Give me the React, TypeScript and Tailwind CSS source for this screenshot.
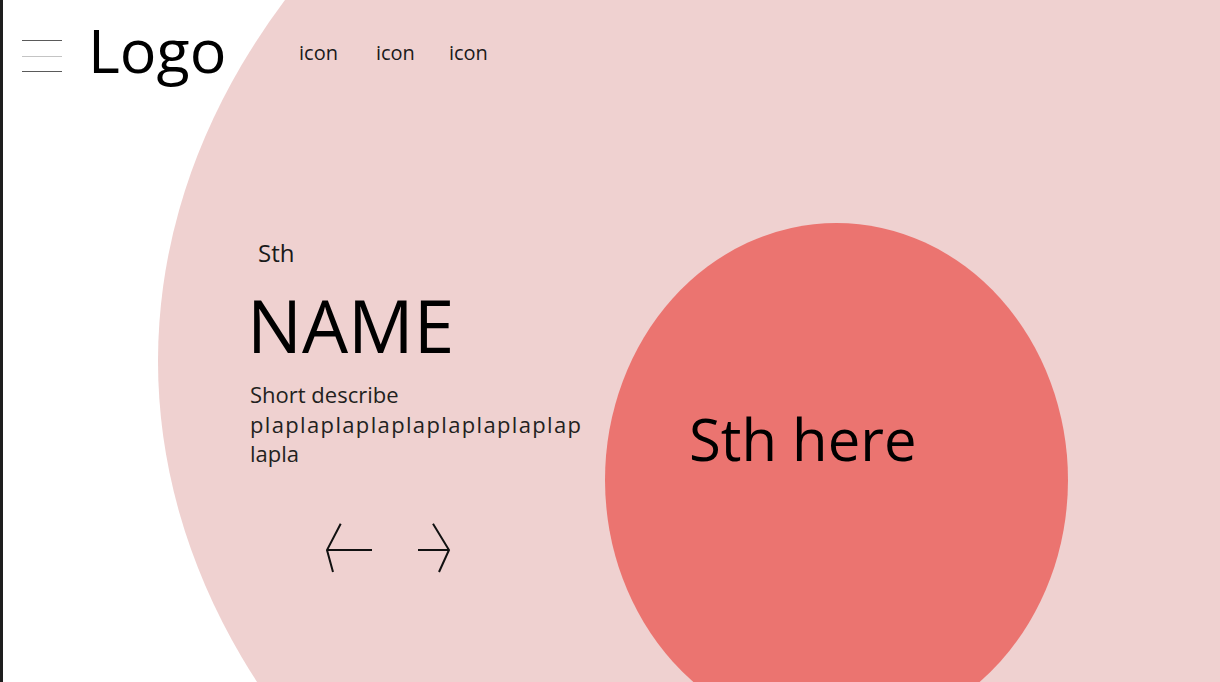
import { useState } from "react";

const lines = ["Short describe", "plaplaplaplaplaplaplaplaplap", "lapla"];

function Hamburger() {
    return (
        <div className="mt-[40px] flex w-[40px] flex-col gap-[14.5px]">
            <span className="block h-px bg-[#5a5a5a]" />
            <span className="block h-px bg-[#c4c4c4]" />
            <span className="block h-px bg-[#5a5a5a]" />
        </div>
    );
}

function ArrowLeft() {
    return (
        <svg width="49" height="54" viewBox="0 0 49 54" fill="none" stroke="#111" strokeWidth="2">
            <path d="M2 29H47" />
            <path d="M15.7 2.7L2 29L8 51" />
        </svg>
    );
}

function ArrowRight() {
    return (
        <svg width="37" height="54" viewBox="0 0 37 54" fill="none" stroke="#111" strokeWidth="2">
            <path d="M3 29H34" />
            <path d="M18 2.7L34 29L24 51" />
        </svg>
    );
}

export default function App() {
    const [slide, setSlide] = useState(0);

    return (
        <div className="relative h-[682px] w-[1220px] overflow-hidden border-l-[3px] border-[#1e1e1e] bg-white font-['Open_Sans',sans-serif] text-black">
            {/* background blob, runs off the right edge */}
            <div className="absolute left-[155px] top-[-413px] h-[1548px] w-[2200px] rounded-[50%] bg-[#efd1d0]" />

            <header className="relative flex h-[100px] items-start pl-[19px]">
                <Hamburger />
                <div className="ml-[26px] mt-[19px] w-[211px] text-[61px] leading-none">Logo</div>
                <nav className="mt-[43px] flex text-[20px] leading-none text-[#1a1a1a]">
                    <span>icon</span>
                    <span className="ml-[38px]">icon</span>
                    <span className="ml-[34px]">icon</span>
                </nav>
            </header>

            <main className="relative flex items-start">
                <section className="ml-[247px] mt-[141px] w-[355px] shrink-0">
                    <p className="ml-[8px] text-[24px] leading-none text-[#1a1a1a]">Sth</p>
                    <h1 className="-ml-[3px] mt-[23px] text-[73px] leading-none">NAME</h1>
                    <p className="mt-[19px] text-[22px] leading-[29.5px] text-[#231f20]">
                        {lines.map((l, i) => (
                            <span key={i} className={i == 1 ? "block tracking-[1.35px]" : "block"}>{l}</span>
                        ))}
                    </p>
                    <div className="ml-[75px] mt-[52px] flex gap-[41px]">
                        <button onClick={() => setSlide(slide - 1)}><ArrowLeft /></button>
                        <button onClick={() => setSlide(slide + 1)}><ArrowRight /></button>
                    </div>
                </section>

                <div className="mt-[123px] h-[514px] w-[463px] shrink-0 rounded-[50%] bg-[#eb7470] pl-[84px] pt-[187px]">
                    <p className="text-[58px] leading-none">Sth here</p>
                </div>
            </main>
        </div>
    );
}
